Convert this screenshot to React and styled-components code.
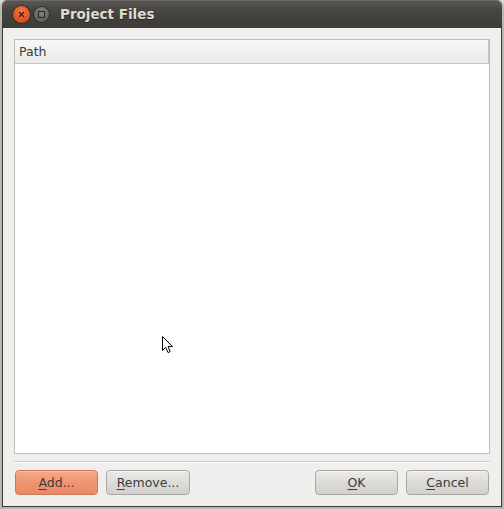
import React from "react";
import styled, { createGlobalStyle } from "styled-components";

const Global = createGlobalStyle`
  html, body {
    margin: 0;
    padding: 0;
    background: #d6d5d2;
  }
  body {
    font-family: "DejaVu Sans", "Liberation Sans", sans-serif;
  }
`;

const Frame = styled.div`
  width: 504px;
  height: 509px;
  box-sizing: border-box;
  padding: 0 2px 2px 2px;
  background: #b9b8b4;
  border-radius: 7px 7px 0 0;
  display: flex;
  flex-direction: column;
`;

const TitleBar = styled.div`
  height: 28px;
  flex: none;
  display: flex;
  align-items: center;
  padding-left: 5px;
  background: linear-gradient(#5a5955, #45443f 40%, #3c3b37);
  border-radius: 6px 6px 0 0;
  box-shadow: inset 0 1px 0 #6b6a66;
`;

const CloseBtn = styled.div`
  width: 17px;
  height: 17px;
  border-radius: 50%;
  background: radial-gradient(circle at 50% 35%, #f47a4a, #dc4f1d 70%);
  box-shadow: 0 0 0 1px #2f2e2b;
  display: flex;
  align-items: center;
  justify-content: center;
  margin-left: 6px;
`;

const MinBtn = styled.div`
  width: 15px;
  height: 15px;
  border-radius: 50%;
  background: radial-gradient(circle at 50% 35%, #8a8985, #5e5d59 75%);
  box-shadow: 0 0 0 1px #2f2e2b;
  display: flex;
  align-items: center;
  justify-content: center;
  margin-left: 4px;
`;

const Title = styled.div`
  margin-left: 11px;
  color: #dfdbd2;
  font-weight: bold;
  font-size: 13.5px;
  text-shadow: 0 1px 0 #2a2926;
`;

const Body = styled.div`
  flex: 1;
  display: flex;
  flex-direction: column;
  background: #f0efed;
  border: 1px solid #3c3b37;
  border-top: none;
  padding: 11px;
  min-height: 0;
`;

const Tree = styled.div`
  position: relative;
  flex: 1;
  background: #ffffff;
  border: 1px solid #bdbcb8;
  display: flex;
  flex-direction: column;
`;

const Header = styled.div`
  height: 24px;
  box-sizing: border-box;
  display: flex;
  align-items: center;
  padding-left: 4px;
  font-size: 12.5px;
  color: #3c3c3c;
  background: linear-gradient(#f7f7f6, #e9e9e7);
  border-bottom: 1px solid #c8c7c3;
  border-right: 1px solid #c8c7c3;
`;

const Cursor = styled.svg`
  position: absolute;
  left: 146px;
  top: 295px;
`;

const Separator = styled.div`
  height: 1px;
  background: #cdccc8;
  margin: 7px 0 8px 0;
  box-shadow: 0 1px 0 #fbfbfa;
`;

const Buttons = styled.div`
  display: flex;
  align-items: center;
  padding: 0 1px;
  gap: 8px;
`;

const Spacer = styled.div`
  flex: 1;
`;

const Button = styled.button`
  width: ${(p) => p.$w || 83}px;
  height: 25px;
  box-sizing: border-box;
  border-radius: 4px;
  font-family: inherit;
  font-size: 12.5px;
  color: #3c3c3c;
  padding: 0;
  border: 1px solid ${(p) => (p.$primary ? "#c97859" : "#a8a7a3")};
  background: ${(p) =>
    p.$primary
      ? "linear-gradient(#f7a888, #ef9572 50%, #ea8a64)"
      : "linear-gradient(#ecebe9, #dcdbd8 50%, #d2d1ce)"};
  box-shadow: inset 0 1px 0 ${(p) => (p.$primary ? "#f9bba2" : "#f4f4f3")};
  u {
    text-decoration-thickness: 1px;
    text-underline-offset: 2px;
  }
`;

export default function App() {
  return (
    <>
      <Global />
      <Frame>
        <TitleBar>
          <CloseBtn>
            <svg width="9" height="9" viewBox="0 0 9 9">
              <path d="M2 2 L7 7 M7 2 L2 7" stroke="#3a1f12" strokeWidth="1.3" />
            </svg>
          </CloseBtn>
          <MinBtn>
            <svg width="9" height="9" viewBox="0 0 9 9">
              <rect x="1.5" y="1.5" width="6" height="6" fill="none" stroke="#2f2e2b" strokeWidth="1.2" />
            </svg>
          </MinBtn>
          <Title>Project Files</Title>
        </TitleBar>
        <Body>
          <Tree>
            <Header>Path</Header>
            <Cursor width="14" height="20" viewBox="0 0 14 20">
              <path
                d="M1.5 1.5 L1.5 15.5 L4.7 12.4 L7 17.6 L9.2 16.6 L7 11.6 L11.5 11.6 Z"
                fill="#fff"
                stroke="#000"
                strokeWidth="1"
              />
            </Cursor>
          </Tree>
          <Separator />
          <Buttons>
            <Button $primary>
              <u>A</u>dd...
            </Button>
            <Button $w={84}>
              <u>R</u>emove...
            </Button>
            <Spacer />
            <Button>
              <u>O</u>K
            </Button>
            <Button>
              <u>C</u>ancel
            </Button>
          </Buttons>
        </Body>
      </Frame>
    </>
  );
}
